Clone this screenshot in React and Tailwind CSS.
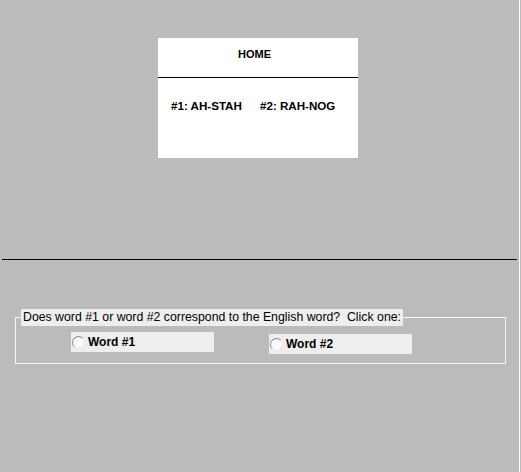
import React, { useState } from 'react';

const FONT = { fontFamily: '"Liberation Sans", Arial, sans-serif' };

// Radio option box, looks like a Swing JRadioButton
const RadioOption = ({ label, checked, onSelect, className }) => (
    <button
        type="button"
        onClick={onSelect}
        className={`flex items-center w-[143px] h-[20px] bg-[#eeeeee] pl-[1px] ${className}`}
    >
        <span className="flex items-center justify-center w-[13px] h-[13px] rounded-full border border-t-[#8d8d8d] border-l-[#8d8d8d] border-r-[#e6e6e6] border-b-[#e6e6e6] bg-[#fafafa]">
            {checked && <span className="w-[5px] h-[5px] rounded-full bg-black" />}
        </span>
        <span className="ml-[3px] text-[12px] leading-[14px] font-bold text-black">{label}</span>
    </button>
);

const App = () => {
    const [choice, setChoice] = useState(null);

    return (
        <div className="flex w-[521px] h-[472px] bg-[#bbbbbb]" style={FONT}>
            <div className="flex flex-col w-[519px]">
                {/* Top panel with the word card */}
                <div className="flex justify-center h-[259px] pt-[38px] pr-[3px]">
                    <div className="w-[200px] h-[120px] bg-white">
                        <div className="h-[40px] pt-[10px] pr-[7px] border-b border-black text-center text-[11px] leading-[12px] font-bold text-black">
                            HOME
                        </div>
                        <div className="flex pt-[21px] pl-[13px] text-[11.6px] leading-[14px] font-bold text-black">
                            <span className="w-[89px]">#1: AH-STAH</span>
                            <span>#2: RAH-NOG</span>
                        </div>
                    </div>
                </div>

                {/* Divider */}
                <div className="mx-[2px] border-t border-black" />

                {/* Question */}
                <div className="pt-[49px] pl-[15px]">
                    <fieldset className="w-[491px] h-[55px] border border-[#f6f6f6]">
                        <legend className="ml-[5px] px-[2px] bg-[#eeeeee] text-[12.3px] leading-[17px] text-black">
                            Does word #1 or word #2 correspond to the English word?&nbsp; Click one:
                        </legend>
                        <div className="flex items-start ml-[55px] gap-[55px]">
                            <RadioOption
                                label="Word #1"
                                checked={choice === 1}
                                onSelect={() => setChoice(1)}
                                className="mt-[6px]"
                            />
                            <RadioOption
                                label="Word #2"
                                checked={choice === 2}
                                onSelect={() => setChoice(2)}
                                className="mt-[8px]"
                            />
                        </div>
                    </fieldset>
                </div>
            </div>
            {/* Window edge */}
            <div className="w-px h-full bg-white" />
        </div>
    );
};

export default App;
